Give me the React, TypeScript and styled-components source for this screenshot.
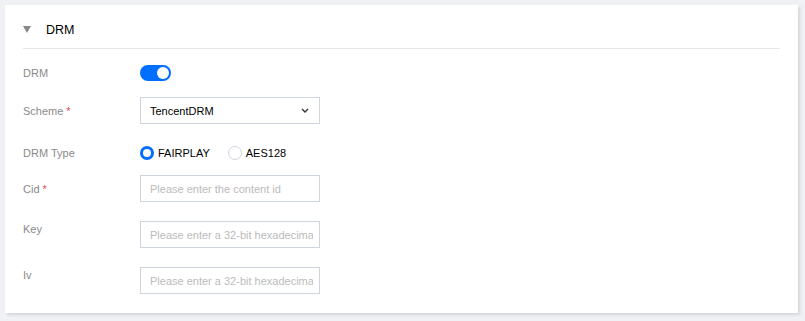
import styled, { createGlobalStyle } from 'styled-components';

const GlobalStyle = createGlobalStyle`
  html, body {
    margin: 0;
    padding: 0;
    background: #f0f1f5;
    font-family: "Liberation Sans", Arial, sans-serif;
  }
`

const Page = styled.div`
  padding: 5px 7px 8px 5px;
`
const Card = styled.section`
  background: #fff;
  height: 308px;
  box-sizing: border-box;
  padding: 0 18px;
  box-shadow: 2px 2px 3px rgba(0, 0, 0, 0.12);
`
const Header = styled.div`
  height: 44px;
  display: flex;
  align-items: center;
  padding-top: 6px;
  box-sizing: border-box;
  border-bottom: 1px solid #e7e7e7;
`
const Caret = styled.span`
  width: 0;
  height: 0;
  border-left: 4px solid transparent;
  border-right: 4px solid transparent;
  border-top: 7px solid #888;
  margin: 0 15px 0 0;
`
const Title = styled.h3`
  margin: 0;
  font-size: 12.5px;
  font-weight: normal;
  color: #000;
`
const Form = styled.div`
  padding-top: 10px;
`
const Row = styled.div<{ $top: number; $align?: string }>`
  display: flex;
  align-items: ${p => p.$align || 'center'};
  margin-top: ${p => p.$top}px;
  min-height: 27px;
`
const Label = styled.label<{ $offset?: number }>`
  width: 117px;
  flex-shrink: 0;
  font-size: 11px;
  color: #8a8a8a;
  padding-top: ${p => p.$offset || 0}px;
`
const Required = styled.span`
  color: #e34d59;
  margin-left: 3px;
`
const Switch = styled.span`
  width: 31px;
  height: 16px;
  border-radius: 8px;
  background: #006eff;
  display: flex;
  align-items: center;
  justify-content: flex-end;
  padding: 0 2px;
  box-sizing: border-box;
`
const Knob = styled.span`
  width: 12px;
  height: 12px;
  border-radius: 50%;
  background: #fff;
`
const Select = styled.div`
  width: 180px;
  height: 27px;
  box-sizing: border-box;
  border: 1px solid #cfd5de;
  display: flex;
  align-items: center;
  justify-content: space-between;
  padding: 0 10px 0 9px;
  font-size: 11px;
  color: #000;
`
const Radios = styled.div`
  display: flex;
  align-items: center;
  gap: 18px;
  height: 27px;
`
const RadioOption = styled.label`
  display: flex;
  align-items: center;
  gap: 4px;
  font-size: 11px;
  color: #000;
`
const RadioDot = styled.span<{ $checked?: boolean }>`
  width: 14px;
  height: 14px;
  border-radius: 50%;
  box-sizing: border-box;
  border: ${p => (p.$checked ? '3.5px solid #006eff' : '1px solid #cfd5de')};
  background: #fff;
`
const Input = styled.input`
  width: 180px;
  height: 27px;
  box-sizing: border-box;
  border: 1px solid #cfd5de;
  padding: 0 6px 0 9px;
  font-family: "Liberation Sans", Arial, sans-serif;
  font-size: 11px;
  outline: none;
  &::placeholder {
    color: #bbb;
  }
`

function Chevron() {
  return (
    <svg width="8" height="5" viewBox="0 0 8 5">
      <path d="M1 1 L4 4 L7 1" fill="none" stroke="#333" strokeWidth="1.4" />
    </svg>
  )
}

export default function App() {
  return (
    <Page>
      <GlobalStyle />
      <Card>
        <Header>
          <Caret />
          <Title>DRM</Title>
        </Header>
        <Form>
          <Row $top={0}>
            <Label>DRM</Label>
            <Switch><Knob /></Switch>
          </Row>
          <Row $top={11}>
            <Label>Scheme<Required>*</Required></Label>
            <Select>
              <span>TencentDRM</span>
              <Chevron />
            </Select>
          </Row>
          <Row $top={15}>
            <Label>DRM Type</Label>
            <Radios>
              <RadioOption><RadioDot $checked />FAIRPLAY</RadioOption>
              <RadioOption><RadioDot />AES128</RadioOption>
            </Radios>
          </Row>
          <Row $top={9}>
            <Label>Cid<Required>*</Required></Label>
            <Input placeholder="Please enter the content id" />
          </Row>
          <Row $top={19} $align="flex-start">
            <Label $offset={2}>Key</Label>
            <Input placeholder="Please enter a 32-bit hexadecimal string" />
          </Row>
          <Row $top={19} $align="flex-start">
            <Label $offset={2}>Iv</Label>
            <Input placeholder="Please enter a 32-bit hexadecimal string" />
          </Row>
        </Form>
      </Card>
    </Page>
  )
}
